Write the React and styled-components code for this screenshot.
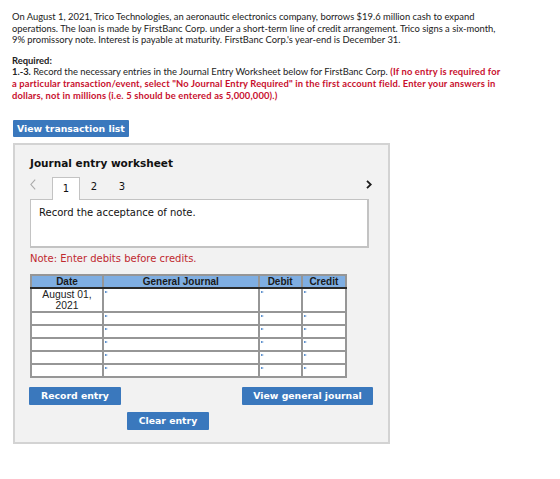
import React from "react";
import styled, { createGlobalStyle } from "styled-components";

const Global = createGlobalStyle`
  html, body {
    margin: 0;
    padding: 0;
    background: #fff;
  }
`;

const Page = styled.div`
  padding: 11px 12px 0 12px;
  font-family: Lato, "Liberation Sans", sans-serif;
  font-size: 9.4px;
  line-height: 11.6px;
  color: #222;
`;

const TextBlock = styled.div`
  max-width: 494px;
`;

const Intro = styled.p`
  margin: 0 0 9px 0;
`;

const Required = styled.div`
  strong.head {
    display: block;
    font-weight: 700;
  }
`;

const Warn = styled.span`
  color: #c8102e;
  font-weight: 700;
  letter-spacing: 0.15px;
`;

const Button = styled.button`
  display: inline-block;
  box-sizing: border-box;
  width: ${(p) => (p.$w ? `${p.$w}px` : "auto")};
  height: 18px;
  padding: 0 4px;
  border: none;
  border-radius: 1px;
  background: #3a78bd;
  color: #fff;
  font-family: "DejaVu Sans", Verdana, sans-serif;
  font-size: 9.3px;
  font-weight: 700;
  line-height: 18px;
  text-align: center;
  white-space: nowrap;
  cursor: pointer;
`;

const TopButton = styled(Button)`
  margin-top: 19px;
  margin-left: 1px;
  height: 17px;
  line-height: 17px;
`;

const Panel = styled.div`
  box-sizing: border-box;
  width: 377px;
  margin: 6px 0 0 1px;
  padding: 10px 15px 12px 15px;
  background: #f2f2f2;
  border: 2px solid #d3d3d3;
  font-family: "DejaVu Sans", Verdana, sans-serif;
`;

const Title = styled.div`
  font-size: 10.5px;
  font-weight: 700;
  color: #111;
  line-height: 16px;
`;

const TabRow = styled.div`
  display: flex;
  align-items: flex-end;
  height: 24px;
  margin-top: 4px;
`;

const Chevron = styled.span`
  display: flex;
  align-items: center;
  justify-content: ${(p) => (p.$right ? "flex-end" : "flex-start")};
  width: 22px;
  height: 24px;
  margin-left: ${(p) => (p.$right ? "auto" : "0")};
  margin-right: ${(p) => (p.$right ? "1px" : "0")};
  padding-bottom: 6px;
  box-sizing: border-box;
`;

const Tab = styled.div`
  box-sizing: border-box;
  width: 28px;
  height: 22px;
  text-align: center;
  font-size: 10px;
  line-height: 20px;
  color: #111;
  ${(p) =>
    p.$active &&
    `
    background: #fff;
    border: 1px solid #c3c3c3;
    border-bottom: none;
    margin-bottom: -1px;
    height: 23px;
    line-height: 21px;
    position: relative;
    z-index: 1;
  `}
`;

const Prompt = styled.div`
  box-sizing: border-box;
  width: 339px;
  height: 49px;
  background: #fff;
  border: 1px solid #c3c3c3;
  border-width: 1px 2px 2px 1px;
  padding: 7px 8px;
  font-size: 10px;
  color: #111;
`;

const Note = styled.div`
  margin-top: 5px;
  font-size: 10px;
  color: #c0292f;
  line-height: 12px;
`;

const Sheet = styled.table`
  margin-top: 9px;
  width: 317px;
  border-collapse: collapse;
  font-family: "Liberation Sans", Arial, sans-serif;
  background: #fff;
  border: 2px solid #969696;
`;

const Th = styled.th`
  height: 11px;
  padding: 0;
  background: #7faee2;
  font-size: 10px;
  font-weight: 700;
  line-height: 11px;
  color: #1a1a1a;
  border: 2px solid #969696;
  border-bottom: 2px solid #2a2a2a;
  width: ${(p) => p.$w}px;
`;

const Td = styled.td`
  position: relative;
  padding: 0;
  height: ${(p) => (p.$tall ? 22 : 11)}px;
  border: 2px solid #969696;
  font-size: 10.3px;
  line-height: 11px;
  text-align: center;
  vertical-align: top;
  color: #222;
`;

const Marker = styled.span`
  position: absolute;
  left: 1px;
  top: 2px;
  width: 0;
  height: 0;
  border-top: 1.5px solid transparent;
  border-bottom: 1.5px solid transparent;
  border-left: 3px solid #3f7cc4;
`;

const Actions = styled.div`
  display: flex;
  justify-content: space-between;
  margin-top: 9px;
  margin-left: -1px;
`;

const ClearRow = styled.div`
  margin: 7px 0 0 97px;
`;

const rows = [
  { date: "August 01, 2021", tall: true },
  { date: "" },
  { date: "" },
  { date: "" },
  { date: "" },
  { date: "" },
];

const InputCell = ({ tall }) => (
  <Td $tall={tall}>
    <Marker />
  </Td>
);

const ArrowLeft = () => (
  <svg width="6" height="11" viewBox="0 0 6 11">
    <path d="M5.2 0.6 L0.9 5.5 L5.2 10.4" fill="none" stroke="#a9a9a9" strokeWidth="1.1" />
  </svg>
);

const ArrowRight = () => (
  <svg width="6" height="9" viewBox="0 0 6 9">
    <path d="M1 0.8 L4.8 4.5 L1 8.2" fill="none" stroke="#1c1c1c" strokeWidth="1.8" />
  </svg>
);

export default function App() {
  return (
    <Page>
      <Global />
      <TextBlock>
        <Intro>
          On August 1, 2021, Trico Technologies, an aeronautic electronics
          company, borrows $19.6 million cash to expand operations. The loan is
          made by FirstBanc Corp. under a short-term line of credit arrangement.
          Trico signs a six-month, 9% promissory note. Interest is payable at
          maturity. FirstBanc Corp.'s year-end is December 31.
        </Intro>
        <Required>
          <strong className="head">Required:</strong>
          <strong>1.-3.</strong> Record the necessary entries in the Journal
          Entry Worksheet below for FirstBanc Corp.{" "}
          <Warn>
            (If no entry is required for a particular transaction/event, select
            "No Journal Entry Required" in the first account field. Enter your
            answers in dollars, not in millions (i.e. 5 should be entered as
            5,000,000).)
          </Warn>
        </Required>
      </TextBlock>

      <TopButton>View transaction list</TopButton>

      <Panel>
        <Title>Journal entry worksheet</Title>
        <TabRow>
          <Chevron>
            <ArrowLeft />
          </Chevron>
          <Tab $active>1</Tab>
          <Tab>2</Tab>
          <Tab>3</Tab>
          <Chevron $right>
            <ArrowRight />
          </Chevron>
        </TabRow>
        <Prompt>Record the acceptance of note.</Prompt>
        <Note>Note: Enter debits before credits.</Note>

        <Sheet>
          <thead>
            <tr>
              <Th $w={72}>Date</Th>
              <Th $w={160}>General Journal</Th>
              <Th $w={42}>Debit</Th>
              <Th $w={43}>Credit</Th>
            </tr>
          </thead>
          <tbody>
            {rows.map((r, i) => (
              <tr key={i}>
                <Td $tall={r.tall}>
                  {r.date && (
                    <>
                      August 01,
                      <br />
                      2021
                    </>
                  )}
                </Td>
                <InputCell tall={r.tall} />
                <InputCell tall={r.tall} />
                <InputCell tall={r.tall} />
              </tr>
            ))}
          </tbody>
        </Sheet>

        <Actions>
          <Button $w={92}>Record entry</Button>
          <Button $w={131}>View general journal</Button>
        </Actions>
        <ClearRow>
          <Button $w={82}>Clear entry</Button>
        </ClearRow>
      </Panel>
    </Page>
  );
}
